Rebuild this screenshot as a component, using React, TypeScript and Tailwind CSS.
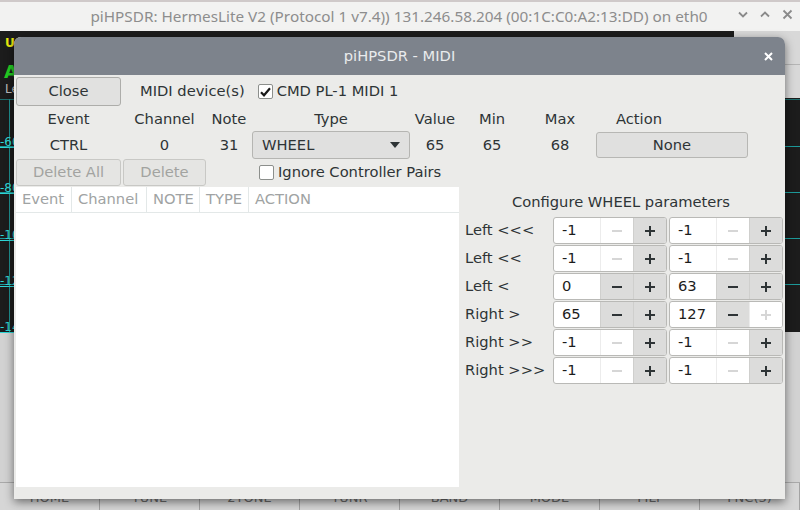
import React from "react";

const INK = "#2e3436";

function MinusIcon({ on }: { on: boolean }) {
  return (
    <svg width="10" height="2" viewBox="0 0 10 2">
      <rect width="10" height="2" fill={on ? INK : "#d6d6d6"} />
    </svg>
  );
}

function PlusIcon({ on }: { on: boolean }) {
  return (
    <svg width="10" height="10" viewBox="0 0 10 10">
      <rect x="0" y="4" width="10" height="2" fill={on ? INK : "#d6d6d6"} />
      <rect x="4" y="0" width="2" height="10" fill={on ? INK : "#d6d6d6"} />
    </svg>
  );
}

function Spin({ v, m, p }: { v: string; m: boolean; p: boolean }) {
  return (
    <div className="flex h-[27px] w-[114px] overflow-hidden rounded-[3px] border border-[#b9b9b6] bg-white">
      <div className="flex w-[46px] items-center pl-[8px] text-[#1c1c1c]">{v}</div>
      <div
        className={
          m
            ? "flex w-[33px] items-center justify-center border-l border-[#cfcfcd] bg-[#dcdcdb]"
            : "flex w-[33px] items-center justify-center border-l border-[#ececec] bg-white"
        }
      >
        <MinusIcon on={m} />
      </div>
      <div
        className={
          p
            ? "flex w-[33px] items-center justify-center border-l border-[#cfcfcd] bg-[#dcdcdb]"
            : "flex w-[33px] items-center justify-center border-l border-[#ececec] bg-white"
        }
      >
        <PlusIcon on={p} />
      </div>
    </div>
  );
}

function Check({ checked }: { checked: boolean }) {
  return (
    <div className="flex h-[15px] w-[15px] items-center justify-center rounded-[2px] border border-[#8c8f8c] bg-white">
      {checked && (
        <svg width="11" height="10" viewBox="0 0 11 10">
          <path d="M1 5.2 L4 8.3 L10 1.2" fill="none" stroke="#1a1a1a" strokeWidth="2.2" />
        </svg>
      )}
    </div>
  );
}

const wheelRows: { label: string; a: [string, boolean, boolean]; b: [string, boolean, boolean] }[] = [
  { label: "Left <<<", a: ["-1", false, true], b: ["-1", false, true] },
  { label: "Left <<", a: ["-1", false, true], b: ["-1", false, true] },
  { label: "Left <", a: ["0", true, true], b: ["63", true, true] },
  { label: "Right >", a: ["65", true, true], b: ["127", true, false] },
  { label: "Right >>", a: ["-1", false, true], b: ["-1", false, true] },
  { label: "Right >>>", a: ["-1", false, true], b: ["-1", false, true] },
];

const gridLines = [115, 161, 207, 253];
const dbLabels = [
  { t: "-60", y: 104 },
  { t: "-80", y: 150 },
  { t: "-100", y: 197 },
  { t: "-120", y: 243 },
  { t: "-140", y: 289 },
];

const bottomButtons = ["HOME", "TUNE", "2TONE", "TUNR", "BAND", "MODE", "FILT", "FNC(3)"];

export default function App() {
  return (
    <div
      className="relative h-[510px] w-[800px] overflow-hidden bg-[#1c1c1c]"
      style={{ fontFamily: "'DejaVu Sans', sans-serif" }}
    >
      {/* main window */}
      <div className="flex h-[510px] w-[800px] flex-col">
        <div className="relative flex h-[31px] items-center justify-center border-t-[2px] border-[#cfc9c9] bg-[#f2f2f1]">
          <span
            className="whitespace-nowrap pr-[2px] text-[15.3px] text-[#8d8d8d]"
            style={{ fontFamily: "'Noto Sans', sans-serif" }}
          >
            piHPSDR: HermesLite V2 (Protocol 1 v7.4)) 131.246.58.204 (00:1C:C0:A2:13:DD) on eth0
          </span>
          <div className="absolute right-[7px] top-[7px] flex items-center gap-[12px]">
            <svg width="10" height="7" viewBox="0 0 10 7">
              <path d="M1 1.5 L5 5.5 L9 1.5" fill="none" stroke="#8a8a8a" strokeWidth="1.8" />
            </svg>
            <svg width="10" height="7" viewBox="0 0 10 7">
              <path d="M1 5.5 L5 1.5 L9 5.5" fill="none" stroke="#8a8a8a" strokeWidth="1.8" />
            </svg>
            <svg width="11" height="11" viewBox="0 0 11 11">
              <path d="M1.5 1.5 L9.5 9.5 M9.5 1.5 L1.5 9.5" fill="none" stroke="#8a8a8a" strokeWidth="1.8" />
            </svg>
          </div>
        </div>
        <div className="relative h-[301px] bg-[#1c1c1c]">
          <div className="absolute left-[5px] top-[3px] text-[12px] font-bold text-[#e8e810]">USB</div>
          <div className="absolute left-[4px] top-[27px] text-[18px] font-bold text-[#22cc22]">A</div>
          <div className="absolute left-[5px] top-[49px] text-[12px] text-[#bdbdbd]">Le</div>
          <div className="absolute left-0 top-[68px] h-[1px] w-full bg-[#1f6f6f]" />
          <div className="absolute left-[9px] top-[68px] h-[233px] w-[1px] bg-[#1f8f8f]" />
          {gridLines.map((y) => (
            <div key={y} className="absolute left-0 h-[1px] w-full bg-[#1d9a9a]" style={{ top: y }} />
          ))}
          {dbLabels.map((l) => (
            <div
              key={l.t}
              className="absolute left-0 text-[12px] leading-[14px] text-[#2fd6d6] underline"
              style={{ top: l.y }}
            >
              {l.t}
            </div>
          ))}
          <div className="absolute right-0 top-0 h-[67px] w-[66px] bg-[#d8d8d8]">
            <div className="mt-[33px] h-[1px] w-full bg-[#b5b5b5]" />
          </div>
        </div>
        <div className="h-[150px] bg-[#d2d2d2]" />
        <div className="grid h-[28px] grid-cols-8 border-t border-[#a9a9a9] bg-[#d6d6d6]">
          {bottomButtons.map((b) => (
            <div
              key={b}
              className="flex items-center justify-center border-r border-[#a3a3a3] pt-[2px] text-[13px] text-[#6a6a6a]"
            >
              {b}
            </div>
          ))}
        </div>
      </div>

      {/* MIDI dialog */}
      <div className="absolute left-[14px] top-[37px] flex h-[462px] w-[771px] flex-col overflow-hidden rounded-t-[7px] bg-[#ebebe9] text-[14.7px] text-[#2e3436] shadow-[0_3px_10px_rgba(0,0,0,0.5)]">
        <div className="relative flex h-[38px] items-center justify-center bg-[#7d838c]">
          <span className="text-[14.7px] text-[#e9ebed]">piHPSDR - MIDI</span>
          <svg className="absolute right-[12px] top-[15px]" width="9" height="9" viewBox="0 0 9 9">
            <path d="M1 1 L8 8 M8 1 L1 8" fill="none" stroke="#ffffff" strokeWidth="2" />
          </svg>
        </div>
        <div className="flex flex-1 flex-col px-[2px] pt-[2px]">
          {/* row 1 */}
          <div className="flex h-[29px] items-center">
            <div className="flex h-[29px] w-[105px] items-center justify-center rounded-[3px] border border-[#adadaa] bg-[#e1e1e0]">
              Close
            </div>
            <span className="ml-[19px]">MIDI device(s)</span>
            <div className="ml-[13px]">
              <Check checked />
            </div>
            <span className="ml-[4px]">CMD PL-1 MIDI 1</span>
          </div>
          {/* rows 2-4 */}
          <div className="mt-[1px] grid grid-cols-[105px_83px_42px_158px_46px_64px_68px_152px] grid-rows-[24px_28px_27px] gap-x-[2px]">
            <div className="flex items-center justify-center">Event</div>
            <div className="flex items-center justify-center">Channel</div>
            <div className="flex items-center justify-center">Note</div>
            <div className="flex items-center justify-center">Type</div>
            <div className="flex items-center justify-center">Value</div>
            <div className="flex items-center justify-center">Min</div>
            <div className="flex items-center justify-center">Max</div>
            <div className="flex items-center pl-[20px]">Action</div>

            <div className="flex items-center justify-center">CTRL</div>
            <div className="flex items-center justify-center">0</div>
            <div className="flex items-center justify-center">31</div>
            <div className="flex items-center justify-between rounded-[3px] border border-[#b5b5b2] bg-[#e0e0df] pl-[9px] pr-[9px]">
              <span>WHEEL</span>
              <svg width="10" height="6" viewBox="0 0 10 6">
                <path d="M0 0 L10 0 L5 6 Z" fill={INK} />
              </svg>
            </div>
            <div className="flex items-center justify-center">65</div>
            <div className="flex items-center justify-center">65</div>
            <div className="flex items-center justify-center">68</div>
            <div className="flex items-center">
              <div className="flex h-[26px] w-full items-center justify-center rounded-[3px] border border-[#b7b7b4] bg-[#e0e0df]">
                None
              </div>
            </div>

            <div className="flex items-center justify-center rounded-[3px] border border-[#c8c8c5] bg-[#e5e5e3] text-[#a2a3a0]">
              Delete All
            </div>
            <div className="flex items-center justify-center rounded-[3px] border border-[#c8c8c5] bg-[#e5e5e3] text-[#a2a3a0]">
              Delete
            </div>
            <div />
            <div className="col-span-5 flex items-center pl-[7px]">
              <Check checked={false} />
              <span className="ml-[4px]">Ignore Controller Pairs</span>
            </div>
          </div>
          {/* table + wheel config */}
          <div className="mt-[1px] flex h-[300px]">
            <div className="w-[443px] bg-white">
              <div className="flex h-[26px] border-b border-[#e3e8e8] text-[#a0a3a3]">
                <div className="flex w-[56px] items-center border-r border-[#e3e8e8] pl-[6px]">Event</div>
                <div className="flex w-[75px] items-center border-r border-[#e3e8e8] pl-[6px]">Channel</div>
                <div className="flex w-[53px] items-center border-r border-[#e3e8e8] pl-[6px]">NOTE</div>
                <div className="flex w-[49px] items-center border-r border-[#e3e8e8] pl-[6px]">TYPE</div>
                <div className="flex flex-1 items-center pl-[6px]">ACTION</div>
              </div>
            </div>
            <div className="flex flex-1 flex-col">
              <div className="flex h-[30px] items-center justify-center">Configure WHEEL parameters</div>
              <div className="flex flex-col gap-[1px]">
                {wheelRows.map((r) => (
                  <div key={r.label} className="flex h-[27px] items-center">
                    <div className="w-[94px] pl-[6px]">{r.label}</div>
                    <Spin v={r.a[0]} m={r.a[1]} p={r.a[2]} />
                    <div className="ml-[2px]">
                      <Spin v={r.b[0]} m={r.b[1]} p={r.b[2]} />
                    </div>
                  </div>
                ))}
              </div>
            </div>
          </div>
        </div>
      </div>
    </div>
  );
}
